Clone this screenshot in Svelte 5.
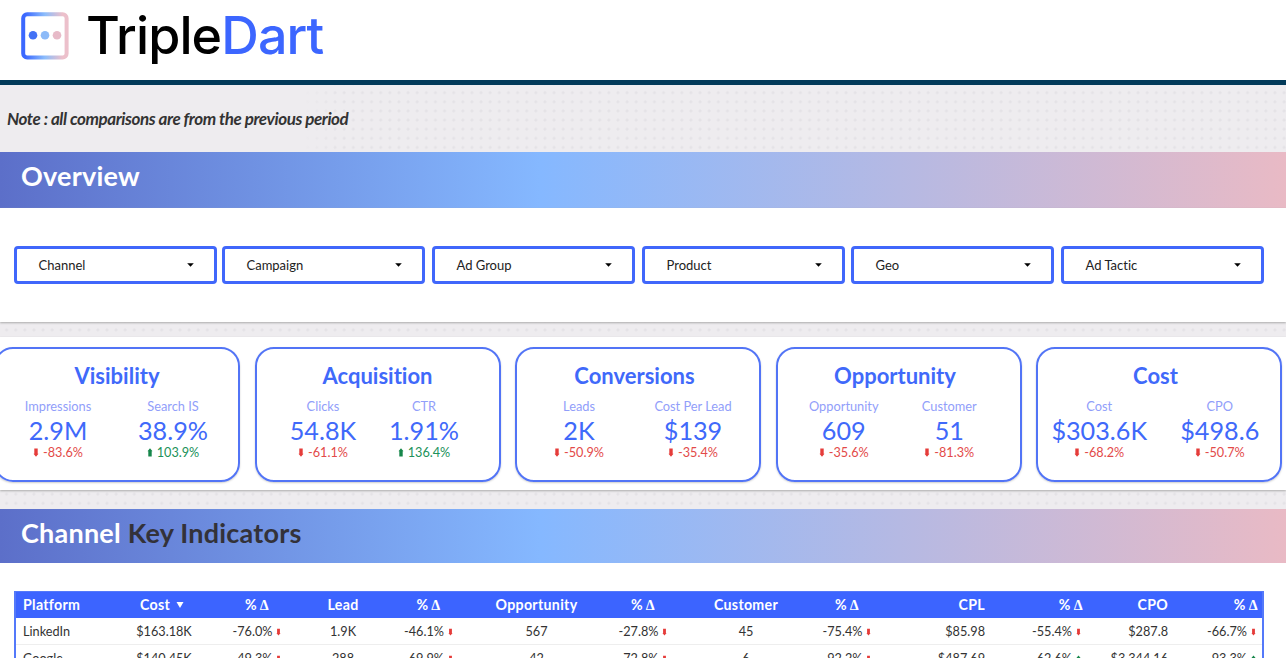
<script lang="ts">
	type Metric = { label: string; value: string; change: string; up?: boolean };

	// margin is the space between a filter and the one before it
	const filters = [
		{ label: "Channel", margin: 0 },
		{ label: "Campaign", margin: 5 },
		{ label: "Ad Group", margin: 7 },
		{ label: "Product", margin: 7 },
		{ label: "Geo", margin: 6 },
		{ label: "Ad Tactic", margin: 7 },
	];

	const cards: { title: string; shift: number; start: number; column: number; metrics: Metric[] }[] = [
		{
			title: "Visibility",
			shift: 0,
			start: 4.5,
			column: 115,
			metrics: [
				{ label: "Impressions", value: "2.9M", change: "-83.6%" },
				{ label: "Search IS", value: "38.9%", change: "103.9%", up: true },
			],
		},
		{
			title: "Acquisition",
			shift: 0,
			start: 16,
			column: 101,
			metrics: [
				{ label: "Clicks", value: "54.8K", change: "-61.1%" },
				{ label: "CTR", value: "1.91%", change: "136.4%", up: true },
			],
		},
		{
			title: "Conversions",
			shift: 7,
			start: 5,
			column: 114,
			metrics: [
				{ label: "Leads", value: "2K", change: "-50.9%" },
				{ label: "Cost Per Lead", value: "$139", change: "-35.4%" },
			],
		},
		{
			title: "Opportunity",
			shift: 7,
			start: 13.5,
			column: 105.5,
			metrics: [
				{ label: "Opportunity", value: "609", change: "-35.6%" },
				{ label: "Customer", value: "51", change: "-81.3%" },
			],
		},
		{
			title: "Cost",
			shift: 7,
			start: 1,
			column: 120.5,
			metrics: [
				{ label: "Cost", value: "$303.6K", change: "-68.2%" },
				{ label: "CPO", value: "$498.6", change: "-50.7%" },
			],
		},
	];

	const delta = "% Δ";
	const columns = [
		{ label: "Platform", width: 101, align: "left" },
		{ label: "Cost", width: 94, align: "center", sorted: true },
		{ label: delta, width: 92, align: "center" },
		{ label: "Lead", width: 80, align: "center" },
		{ label: delta, width: 91, align: "center" },
		{ label: "Opportunity", width: 125, align: "center" },
		{ label: delta, width: 88, align: "center" },
		{ label: "Customer", width: 118, align: "center" },
		{ label: delta, width: 84, align: "center" },
		{ label: "CPL", width: 96, align: "right" },
		{ label: delta, width: 98, align: "right" },
		{ label: "CPO", width: 85, align: "right" },
		{ label: delta, width: 90, align: "right" },
	];
	const rows = [
		["LinkedIn", "$163.18K", "-76.0%", "1.9K", "-46.1%", "567", "-27.8%", "45", "-75.4%", "$85.98", "-55.4%", "$287.8", "-66.7%"],
		["Google", "$140.45K", "-49.3%", "288", "-69.9%", "42", "-72.8%", "6", "-92.2%", "$487.69", "62.6%", "$3,344.16", "93.3%"],
	];
	const isChange = (i: number) => columns[i].label === delta;
</script>

{#snippet arrow(up: boolean)}
	<svg class="arrow" class:up viewBox="0 0 6 9" width="6" height="9">
		<path d="M1.3 0.5h3.4v5.3h0.8L3 8.8 0.5 5.8h0.8z" />
	</svg>
{/snippet}

<div class="report">
	<header>
		<svg class="mark" viewBox="0 0 48 48" width="48" height="48">
			<defs>
				<linearGradient id="frame" x1="0" x2="1" y1="0" y2="0">
					<stop offset="0.05" stop-color="#3b68ff" />
					<stop offset="0.5" stop-color="#8cbdfb" />
					<stop offset="0.9" stop-color="#ecc0cb" />
				</linearGradient>
			</defs>
			<rect x="2.2" y="2.2" width="43.4" height="43.4" rx="4" fill="none" stroke="url(#frame)" stroke-width="4" />
			<circle cx="12" cy="23.3" r="4.3" fill="#4472f5" />
			<circle cx="24" cy="23.3" r="4.3" fill="#8cbaf8" />
			<circle cx="36" cy="23.3" r="4.3" fill="#e7bac8" />
		</svg>
		<div class="brand">Triple<span>Dart</span></div>
	</header>

	<div class="note">Note : all comparisons are from the previous period</div>

	<h2 class="banner">Overview</h2>
	<div class="filters">
		{#each filters as filter}
			<div class="filter" style={`margin-left: ${filter.margin}px`}>
				<span>{filter.label}</span>
				<svg viewBox="0 0 7 4" width="7" height="4"><path d="M0.2 0.2h6.6L3.5 3.8z" /></svg>
			</div>
		{/each}
	</div>

	<div class="cards">
		{#each cards as card}
			<section class="card">
				<h3 style={`padding-right: ${card.shift}px`}>{card.title}</h3>
				<div
					class="metrics"
					style={`margin-left: ${card.start}px; grid-template-columns: ${card.column}px ${card.column}px`}
				>
					{#each card.metrics as metric}
						<div class="metric">
							<div class="label">{metric.label}</div>
							<div class="value">{metric.value}</div>
							<div class="change" class:up={metric.up}>
								{@render arrow(!!metric.up)}
								{metric.change}
							</div>
						</div>
					{/each}
				</div>
			</section>
		{/each}
	</div>

	<h2 class="banner channel">Channel <span>Key Indicators</span></h2>
	<div class="table-wrap">
		<table>
			<colgroup>
				{#each columns as column}
					<col style={`width: ${column.width}px`} />
				{/each}
				<col />
			</colgroup>
			<thead>
				<tr>
					{#each columns as column}
						<th class={column.align}>
							{#if column.label === delta}
								%<span class="delta">Δ</span>
							{:else}
								{column.label}
							{/if}
							{#if column.sorted}
								<svg class="sort" viewBox="0 0 8 6" width="8" height="6"><path d="M0.5 0h7L4 6z" /></svg>
							{/if}
						</th>
					{/each}
					<th></th>
				</tr>
			</thead>
			<tbody>
				{#each rows as row}
					<tr>
						{#each row as cell, i}
							<td class={columns[i].align} class:pct={isChange(i)}>
								{cell}{#if isChange(i)}{@render arrow(!cell.startsWith("-"))}{/if}
							</td>
						{/each}
						<td></td>
					</tr>
				{/each}
			</tbody>
		</table>
	</div>
</div>

<style>
	:global(body) {
		overflow: hidden;
	}

	.report {
		width: 1286px;
		height: 658px;
		overflow: hidden;
		background-color: #eeecef;
		background-image: radial-gradient(circle, #e4e2e6 1.2px, transparent 1.7px);
		background-size: 9.13px 9.13px;
		background-position: 2px 6px;
		font-family: Lato, sans-serif;
		font-variant-ligatures: none;
		color: #333;
	}

	header {
		display: flex;
		box-sizing: border-box;
		height: 85px;
		padding: 12px 0 0 21px;
		background: #fff;
		border-bottom: 5px solid #023a59;
	}

	.brand {
		margin: -8px 0 0 17px;
		font: 500 52px/64px Inter, sans-serif;
		letter-spacing: -0.9px;
		color: #000;
	}

	.brand span {
		color: #3c66ff;
	}

	.note {
		height: 67px;
		padding-left: 7px;
		font-size: 17px;
		font-weight: bold;
		font-style: italic;
		letter-spacing: -0.42px;
		line-height: 68px;
		background: linear-gradient(90deg, #eeecef 300px, transparent 340px);
	}

	.banner {
		box-sizing: border-box;
		height: 56px;
		margin: 0;
		padding-left: 21px;
		font-size: 27px;
		font-weight: bold;
		letter-spacing: 0.22px;
		line-height: 47px;
		color: #fff;
		background: linear-gradient(90deg, #5c6fc9 0%, #85b8ff 42%, #e9bac5 100%);
	}

	.banner.channel {
		height: 54px;
		margin-top: 19px;
	}

	.banner span {
		color: #333239;
	}

	.filters {
		display: flex;
		box-sizing: border-box;
		height: 114px;
		padding: 38px 0 0 14px;
		background: #fff;
		box-shadow: 0 1px 2px #aaa;
	}

	.filter {
		display: flex;
		flex: none;
		align-items: center;
		justify-content: space-between;
		box-sizing: border-box;
		width: 203px;
		height: 38px;
		padding: 0 20px 0 21.5px;
		border: 3px solid #4067fb;
		border-radius: 4px;
		font-size: 13px;
		color: #222;
	}

	.cards {
		display: flex;
		gap: 14.5px;
		box-sizing: border-box;
		height: 153px;
		margin-top: 15px;
		padding: 10px 0 0;
		background: #fff;
		box-shadow: 0 1px 2px #aaa;
	}

	.card {
		flex: none;
		box-sizing: border-box;
		width: 246px;
		height: 135px;
		border: 2px solid #5274f6;
		border-radius: 19px;
		box-shadow: 0 1px 2px #0003;
		text-align: center;
		color: #4069fa;
	}

	.card:first-child {
		margin-left: -6px;
	}

	h3 {
		margin: 13px 0 0;
		font-size: 22px;
		line-height: 27px;
	}

	.metrics {
		display: grid;
		margin-top: 8px;
	}

	.label {
		font-size: 12.8px;
		line-height: 18px;
		color: #919efa;
	}

	.value {
		font-size: 25.2px;
		line-height: 30px;
	}

	.change {
		display: flex;
		align-items: center;
		justify-content: center;
		gap: 4px;
		font-size: 12.7px;
		line-height: 15px;
		color: #e34a49;
	}

	.change.up {
		color: #20915a;
	}

	.arrow {
		fill: #e53c3a;
	}

	.arrow.up {
		fill: #16864a;
		transform: rotate(180deg);
	}

	.table-wrap {
		height: 95px;
		padding: 28px 0 0 14px;
		background: #fff;
	}

	table {
		width: 1250px;
		border: 2px solid #5479fa;
		border-top-width: 1px;
		box-sizing: border-box;
		border-spacing: 0;
		table-layout: fixed;
		font-size: 12.7px;
	}

	th,
	td {
		box-sizing: border-box;
		height: 27px;
		padding: 0;
		line-height: 18px;
		white-space: nowrap;
		text-align: center;
	}

	th {
		height: 26px;
		font-size: 14.2px;
		letter-spacing: 0.3px;
		color: #fff;
		background: #3c64ff;
	}

	td {
		border-bottom: 1px solid #eee;
	}

	.left {
		padding-left: 7px;
		text-align: left;
	}

	.right {
		text-align: right;
	}

	.right.pct {
		padding-right: 2px;
	}

	.delta {
		margin-left: 3px;
		font-family: "Liberation Serif", serif;
	}

	.sort {
		margin-left: 2px;
		fill: #fff;
		vertical-align: 2px;
	}

	th .sort {
		margin-right: 4px;
	}

	td .arrow {
		width: 5px;
		height: 8px;
		margin-left: 4px;
		vertical-align: 0;
	}
</style>
